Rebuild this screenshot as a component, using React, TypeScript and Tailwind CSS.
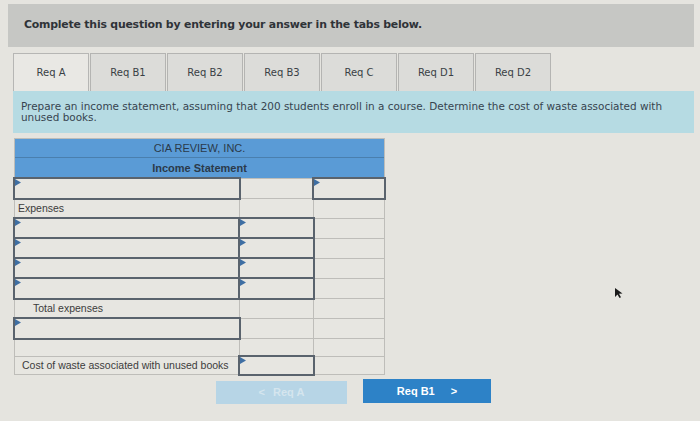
import React from "react";

const tabs = ["Req A", "Req B1", "Req B2", "Req B3", "Req C", "Req D1", "Req D2"];

function Tri() {
  return (
    <svg className="absolute left-0 top-0" width="6" height="7" viewBox="0 0 6 7">
      <path d="M0 0 L6 3.5 L0 7 Z" fill="#3f6fa3" />
    </svg>
  );
}

function Cell({
  input,
  short,
  children,
  className = "",
}: {
  input?: boolean;
  short?: boolean;
  children?: React.ReactNode;
  className?: string;
}) {
  return (
    <div
      className={
        "relative bg-[#e7e6e1] flex items-center text-[10.5px] text-[#3c3c3c] whitespace-nowrap " +
        (short ? "h-[17px] " : "h-[19px] ") +
        (input ? "outline-2 outline-[#5a636d] z-10 " : "") +
        className
      }
    >
      {input && <Tri />}
      {children}
    </div>
  );
}

export default function App() {
  return (
    <div
      className="relative w-[700px] h-[421px] overflow-hidden bg-[#e5e4df] pt-1 pl-2 pr-[6px]"
      style={{ fontFamily: '"DejaVu Sans", Verdana, sans-serif' }}
    >
      {/* banner */}
      <div className="h-[43px] bg-[#c6c7c4] flex items-center pl-4">
        <span className="text-[10.9px] font-bold text-[#2f3338] tracking-[-0.2px]">
          Complete this question by entering your answer in the tabs below.
        </span>
      </div>

      {/* tabs */}
      <div className="mt-[6px] ml-[5px] flex gap-px">
        {tabs.map((t, i) => (
          <div
            key={t}
            className={
              "w-[76px] h-[38px] flex items-center justify-center text-[10px] text-[#3a3f45] border border-b-0 " +
              (i === 0
                ? "bg-[#e9e8e4] border-[#b6b6b4]"
                : "bg-[#dcdcd9] border-[#b4b4b2]")
            }
          >
            {t}
          </div>
        ))}
      </div>

      {/* instruction */}
      <div className="ml-[5px] h-[42px] bg-[#b6dbe3] pl-2 pr-3 pt-[10px] text-[10.45px] leading-[11px] text-[#37444f]">
        Prepare an income statement, assuming that 200 students enroll in a course. Determine the cost of waste associated with
        unused books.
      </div>

      {/* table */}
      <div
        className="ml-[6px] mt-[5px] w-[371px] grid grid-cols-[224px_73px_70px] gap-px bg-[#bebdb9] p-px"
        style={{ fontFamily: '"Liberation Sans", Arial, sans-serif' }}
      >
        <div className="col-span-3 h-[19px] bg-[#5a9bd6] flex items-center justify-center text-[11px] font-medium text-[#2b3a4a] border-b border-[#4a7fae]">
          CIA REVIEW, INC.
        </div>
        <div className="col-span-3 -mt-px h-[20px] bg-[#5a9bd6] flex items-center justify-center text-[11px] font-semibold text-[#2b3a4a]">
          Income Statement
        </div>

        <Cell input />
        <Cell />
        <Cell input />

        <Cell className="pl-[3px]">Expenses</Cell>
        <Cell />
        <Cell />

        <Cell input />
        <Cell input />
        <Cell />
        <Cell input />
        <Cell input />
        <Cell />
        <Cell input />
        <Cell input />
        <Cell />
        <Cell input />
        <Cell input />
        <Cell />

        <Cell className="pl-[18px]">Total expenses</Cell>
        <Cell />
        <Cell />

        <Cell input />
        <Cell />
        <Cell />

        <Cell short />
        <Cell short />
        <Cell short />

        <Cell short className="pl-[7px]">Cost of waste associated with unused books</Cell>
        <Cell short input />
        <Cell short />
      </div>

      {/* buttons */}
      <div className="mt-[4px] ml-[208px] flex gap-4 items-start">
        <div className="mt-[2px] w-[131px] h-[23px] bg-[#b7d5e6] flex items-center justify-center gap-2 text-[11px] font-bold text-[#d5e5ee]"
          style={{ fontFamily: '"Liberation Sans", Arial, sans-serif' }}>
          <span>&lt;</span>
          <span>Req A</span>
        </div>
        <div className="w-[128px] h-[24px] bg-[#2d82c7] flex items-center justify-center gap-4 text-[11px] font-bold text-white"
          style={{ fontFamily: '"Liberation Sans", Arial, sans-serif' }}>
          <span>Req B1</span>
          <span>&gt;</span>
        </div>
      </div>

      {/* cursor */}
      <svg className="absolute left-[614px] top-[287px]" width="10" height="12" viewBox="0 0 10 12">
        <path d="M1 1 L1 10 L3.5 7.5 L5.5 11 L7 10.2 L5 6.8 L8.5 6.5 Z" fill="#1a1a1a" />
      </svg>
    </div>
  );
}
